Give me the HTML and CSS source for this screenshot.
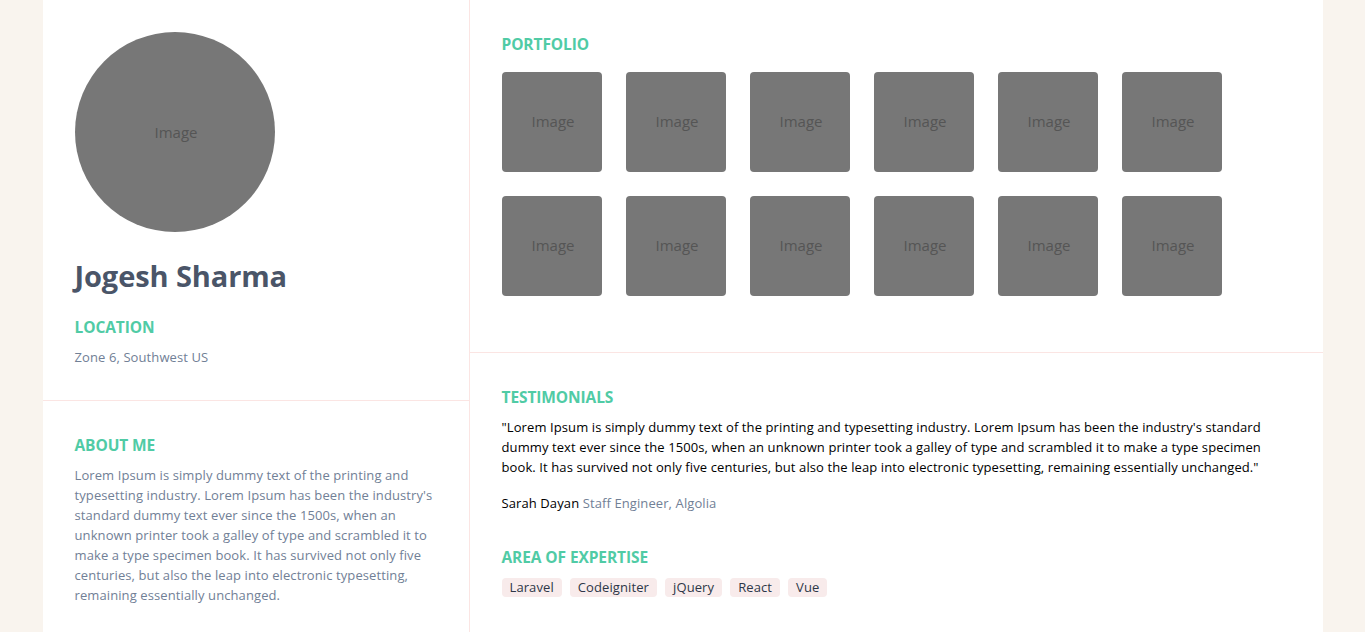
FILE: index.html
```html
<!DOCTYPE html>
<html lang="en">
<head>
<meta charset="utf-8">
<title>Jogesh Sharma</title>
<link rel="stylesheet" href="styles.css">
</head>
<body>
<div class="page">
  <aside class="sidebar">
    <section class="profile">
      <div class="avatar">Image</div>
      <h1 class="name">Jogesh Sharma</h1>
      <h2 class="heading">LOCATION</h2>
      <p class="muted">Zone 6, Southwest US</p>
    </section>
    <section class="about">
      <h2 class="heading">ABOUT ME</h2>
      <p class="muted body">Lorem Ipsum is simply dummy text of the printing and typesetting industry. Lorem Ipsum has been the industry's standard dummy text ever since the 1500s, when an unknown printer took a galley of type and scrambled it to make a type specimen book. It has survived not only five centuries, but also the leap into electronic typesetting, remaining essentially unchanged.</p>
    </section>
  </aside>
  <main class="main">
    <section class="portfolio">
      <h2 class="heading">PORTFOLIO</h2>
      <div class="grid">
        <div class="thumb">Image</div>
        <div class="thumb">Image</div>
        <div class="thumb">Image</div>
        <div class="thumb">Image</div>
        <div class="thumb">Image</div>
        <div class="thumb">Image</div>
        <div class="thumb">Image</div>
        <div class="thumb">Image</div>
        <div class="thumb">Image</div>
        <div class="thumb">Image</div>
        <div class="thumb">Image</div>
        <div class="thumb">Image</div>
      </div>
    </section>
    <section class="testimonials">
      <h2 class="heading">TESTIMONIALS</h2>
      <p class="quote">"Lorem Ipsum is simply dummy text of the printing and typesetting industry. Lorem Ipsum has been the industry's standard dummy text ever since the 1500s, when an unknown printer took a galley of type and scrambled it to make a type specimen book. It has survived not only five centuries, but also the leap into electronic typesetting, remaining essentially unchanged."</p>
      <p class="author">Sarah Dayan <span class="muted">Staff Engineer, Algolia</span></p>
      <h2 class="heading expertise">AREA OF EXPERTISE</h2>
      <ul class="tags">
        <li>Laravel</li>
        <li>Codeigniter</li>
        <li>jQuery</li>
        <li>React</li>
        <li>Vue</li>
      </ul>
    </section>
  </main>
</div>
</body>
</html>
```

FILE: styles.css
```css
* { box-sizing: border-box; }
html, body { margin: 0; padding: 0; }
body {
  background: #f9f4ee;
  font-family: "Open Sans", "Noto Sans", sans-serif;
  font-size: 13px;
  letter-spacing: 0.1px;
  color: #000;
}
p, h1, h2, ul { margin: 0; }
.page {
  width: 1280px;
  margin: 0 auto;
  background: #fff;
  display: flex;
  min-height: 632px;
}
.sidebar {
  width: 427px;
  flex: 0 0 427px;
  border-right: 1px solid #fbe5e3;
}
.profile {
  padding: 32px 32px 32px;
  border-bottom: 1px solid #fbe5e3;
  height: 401px;
}
.avatar {
  width: 200px;
  height: 200px;
  border-radius: 50%;
  background: #777;
  color: #555;
  display: flex;
  align-items: center;
  justify-content: center;
  font-size: 15px;
  letter-spacing: 0;
  padding-left: 3px;
}
.name {
  margin-top: 24px;
  font-size: 29px;
  font-weight: 700;
  color: #4a5568;
  line-height: 40px;
  letter-spacing: -0.1px;
}
.heading {
  font-size: 15.5px;
  font-weight: 700;
  color: #50cba5;
  line-height: 20px;
  letter-spacing: -0.1px;
}
.profile .heading { margin-top: 21px; }
.muted { color: #718096; }
.profile .muted { margin-top: 10px; line-height: 20px; }
.about { padding: 34px 32px; }
.body { margin-top: 10px; line-height: 20px; }
.main { flex: 1; }
.portfolio {
  padding: 34px 32px 32px;
  border-bottom: 1px solid #fbe5e3;
  height: 353px;
}
.grid {
  margin-top: 18px;
  display: grid;
  grid-template-columns: repeat(6, 100px);
  gap: 24px;
}
.thumb {
  width: 100px;
  height: 100px;
  background: #777;
  border-radius: 4px;
  color: #555;
  display: flex;
  align-items: center;
  justify-content: center;
  font-size: 15px;
  letter-spacing: 0;
  padding-bottom: 2px;
  padding-left: 3px;
}
.testimonials { padding: 34px 32px 32px; }
.quote { margin-top: 10px; line-height: 20px; }
.author { margin-top: 16px; line-height: 20px; }
.expertise { margin-top: 34px; }
.tags {
  list-style: none;
  padding: 0;
  margin-top: 11px;
  display: flex;
  gap: 8px;
}
.tags li {
  background: #f8ebeb;
  color: #2d3748;
  border-radius: 4px;
  padding: 0 8px;
  line-height: 19px;
}
```
